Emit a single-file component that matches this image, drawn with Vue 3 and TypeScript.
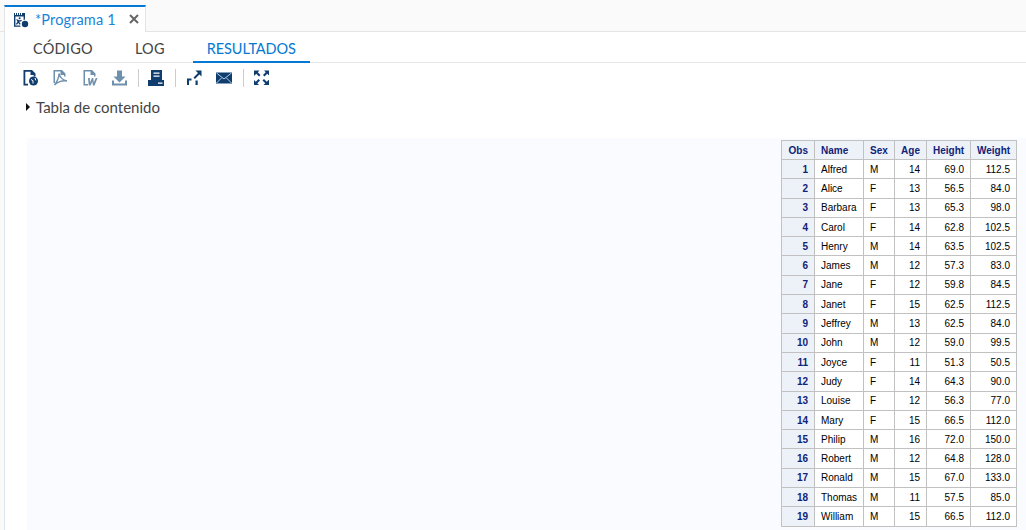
<template>
  <div class="app">
    <div class="tabbar">
      <div class="tab">
        <svg class="tab-icon" viewBox="0 0 16 16" width="16" height="16">
          <path fill="#0f3d6e" d="M1 1h1v2h1V1h1v2h1V1h1v2h1V1h1v2h1V1h3v6.600a4 4 0 0 0-1.400.4V4.400H2.400v9h4.800c.1.500.3 1 .6 1.400H1z" />
          <circle cx="6.600" cy="6.200" r="1" fill="#0f3d6e" />
          <path fill="none" stroke="#0f3d6e" stroke-width="1.300" d="M3.400 12.400l1.800-2.400L4.400 8.200l2.400.8L8.600 8.400M5.400 10l1.800 2.400" />
          <circle cx="12" cy="12" r="3.200" fill="#0f3d6e" />
        </svg>
        <span class="tab-title">*Programa 1</span>
        <svg class="tab-close" viewBox="0 0 10 10" width="10" height="10">
          <path fill="none" stroke="#666" stroke-width="2" d="M1 1l8 8M9 1l-8 8" />
        </svg>
      </div>
    </div>

    <div class="content">
      <div class="subtabs">
        <div v-for="t in subtabs" :key="t" class="subtab" :class="{ active: t === 'RESULTADOS' }">{{ t }}</div>
      </div>

      <div class="toolbar">
        <!-- html -->
        <svg class="ic" viewBox="0 0 16 16"><path fill="#0f3d6e" d="M.5 0h8.500l3.500 3.500v3h-1.800V5H7.500V1.800H2.300v11.900H5V15.500H.5z" /><circle cx="10.500" cy="11" r="4.500" fill="#0f3d6e" /><path fill="none" stroke="#fff" d="M8 9.500l2 1.200v2.800M12 8l.8 2.400" /></svg>
        <!-- pdf -->
        <svg class="ic" viewBox="0 0 16 16"><path fill="#6f90ad" d="M.5 0h8.500l3.500 3.500v3h-1.500V5H7.500V1.500H2v11.500H.5z" /><path fill="none" stroke="#6f90ad" stroke-width="1.400" d="M6 3.500c.4 3-2 8.500-4.500 11.500 2-2.800 8-5 12.500-4-3.500-.5-7-3.500-8-7.500z" /></svg>
        <!-- word -->
        <svg class="ic" viewBox="0 0 16 16"><path fill="#6f90ad" d="M.5 0h8.500l3.500 3.500v3h-1.500V5H7.500V1.500H2v12.500h3v1.500H.5z" /><path fill="#6f90ad" d="M5 8h1.800l.2 4.500L9 8h1.300l.4 4.500L12.800 8h1.700l-3 7.500h-1.700L9.500 11.500l-2 4H5.800z" /></svg>
        <!-- download -->
        <svg class="ic dl" viewBox="0 0 16 16"><path fill="#6f90ad" d="M5 .5h5v6h3.500L7.500 12.500 1.500 6.500H5zM0 10.500h2v3h11v-3h2v5H0z" /></svg>
        <span class="sep"></span>
        <!-- print -->
        <svg class="ic pr" viewBox="0 0 16 16"><path fill="#0f3d6e" d="M3 0h11v10H3zM0 10h16v6H0z" /><path fill="#fff" d="M5.500 2.500h6v1.200h-6zM5.500 5.500h6v1.200h-6zM10 12.500h4.500v1.200H10z" /></svg>
        <span class="sep"></span>
        <!-- open in new window -->
        <svg class="ic" viewBox="0 0 16 16"><path fill="#0f3d6e" d="M9.500 0.500H15.500V6.500L13.400 4.400 8.900 9 7.500 7.600 12 3zM1 8.500h4.500v2H3V15H1zM9.500 10.500h2.200V15H9.500z" /></svg>
        <!-- mail -->
        <svg class="ic" viewBox="0 0 16 16"><path fill="#0f3d6e" d="M0 2.500h16v11H0z" /><path fill="none" stroke="#b9cde0" d="M.5 3L8 9l7.500-6M.5 13l5.300-5.300M15.500 13l-5.300-5.300" /></svg>
        <span class="sep"></span>
        <!-- full screen -->
        <svg class="ic" viewBox="0 0 16 16"><path fill="#0f3d6e" d="M0 .5h5.500L3.800 2.300 6.500 5 5 6.500 2.300 3.800.5 5.500H0zM15 .5v5l-1.800-1.700L10.500 6.500 9 5l2.700-2.700L10 .5zM0 15v-5l1.800 1.700L4.500 9 6 10.500l-2.700 2.700L5 15zM15 15H9.500l1.800-1.800L8.500 10.500 10 9l2.700 2.700L14.500 10h.5z" /></svg>
      </div>

      <div class="toc"><span class="caret"></span>Tabla de contenido</div>

      <div class="results">
        <table class="data">
          <colgroup>
            <col v-for="(w, i) in colWidths" :key="i" :style="{ width: w + 'px' }" />
          </colgroup>
          <thead>
            <tr>
              <th v-for="c in columns" :key="c" :class="{ txt: c === 'Name' || c === 'Sex' }">{{ c }}</th>
            </tr>
          </thead>
          <tbody>
            <tr v-for="(r, i) in rows" :key="r[0]">
              <th>{{ i + 1 }}</th>
              <td>{{ r[0] }}</td>
              <td>{{ r[1] }}</td>
              <td class="num">{{ r[2] }}</td>
              <td class="num">{{ r[3] }}</td>
              <td class="num">{{ r[4] }}</td>
            </tr>
          </tbody>
        </table>
      </div>
    </div>
  </div>
</template>

<script setup lang="ts">
const subtabs = ['CÓDIGO', 'LOG', 'RESULTADOS']
const columns = ['Obs', 'Name', 'Sex', 'Age', 'Height', 'Weight']
const colWidths = [33, 49, 31, 32, 44, 46]

const rows: [string, string, number, string, string][] = [
  ['Alfred', 'M', 14, '69.0', '112.5'],
  ['Alice', 'F', 13, '56.5', '84.0'],
  ['Barbara', 'F', 13, '65.3', '98.0'],
  ['Carol', 'F', 14, '62.8', '102.5'],
  ['Henry', 'M', 14, '63.5', '102.5'],
  ['James', 'M', 12, '57.3', '83.0'],
  ['Jane', 'F', 12, '59.8', '84.5'],
  ['Janet', 'F', 15, '62.5', '112.5'],
  ['Jeffrey', 'M', 13, '62.5', '84.0'],
  ['John', 'M', 12, '59.0', '99.5'],
  ['Joyce', 'F', 11, '51.3', '50.5'],
  ['Judy', 'F', 14, '64.3', '90.0'],
  ['Louise', 'F', 12, '56.3', '77.0'],
  ['Mary', 'F', 15, '66.5', '112.0'],
  ['Philip', 'M', 16, '72.0', '150.0'],
  ['Robert', 'M', 12, '64.8', '128.0'],
  ['Ronald', 'M', 15, '67.0', '133.0'],
  ['Thomas', 'M', 11, '57.5', '85.0'],
  ['William', 'M', 15, '66.5', '112.0'],
]
</script>

<style>
html, body { margin: 0; background: #fff; overflow: hidden; }
</style>

<style scoped>
.app {
  width: 1026px;
  height: 530px;
  overflow: hidden;
  background: #fafafa;
  font-family: Lato, "Open Sans", sans-serif;
  color: #333;
}

.tabbar {
  height: 32px;
  box-sizing: border-box;
  padding: 5px 0 0 4px;
  border-bottom: 1px solid #e4e4e4;
  display: flex;
}
.tab {
  width: 142px;
  height: 27px;
  box-sizing: border-box;
  border-top: 2px solid #0478d2;
  border-right: 1px solid #e4e4e4;
  border-left: 1px solid #e4e4e4;
  background: #fff;
  display: flex;
  align-items: center;
  padding-left: 8px;
}
.tab-icon { flex: none; }
.tab-title { margin: -1px 0 0 6px; font-size: 14.5px; color: #1a84d8; letter-spacing: 0.15px; }
.tab-close { margin: -2px 0 0 13px; flex: none; }

.content {
  margin-left: 4px;
  height: 498px;
  background: #fff;
  border-left: 1px solid #dce6f0;
}

.subtabs {
  margin-left: 14px;
  height: 31px;
  box-sizing: border-box;
  border-bottom: 1px solid #e6e6e6;
  display: flex;
}
.subtab {
  font-size: 14.5px;
  letter-spacing: 0.25px;
  line-height: 33px;
  padding: 0 14px;
  margin-right: 14px;
  height: 31px;
  box-sizing: border-box;
  color: #444;
}
.subtab.active { color: #0478d2; border-bottom: 2px solid #0478d2; letter-spacing: -0.1px; }

.toolbar {
  display: flex;
  align-items: center;
  height: 30px;
  padding-left: 18px;
}
.ic { width: 16px; height: 16px; margin-right: 14px; flex: none; }
.ic.dl { margin: 0 13px 0 -1px; }
.ic.pr { margin-left: -1px; }
.sep { width: 1px; height: 18px; background: #ccc; margin: 0 10px 0 -3px; flex: none; }

.toc {
  display: flex;
  align-items: center;
  height: 28px;
  padding-left: 21px;
  font-size: 15px;
  color: #444;
}
.caret {
  width: 0;
  height: 0;
  border-left: 4px solid #111;
  border-top: 4px solid transparent;
  border-bottom: 4px solid transparent;
  margin-right: 6px;
}

.results {
  margin: 17px 0 0 22px;
  padding: 2px 9px 0 0;
  background: #f9fbff;
  height: 392px;
  box-sizing: border-box;
  display: flex;
  justify-content: flex-end;
}

.data {
  border-collapse: collapse;
  font-family: "Liberation Sans", Arial, sans-serif;
  font-size: 10px;
  color: #000;
  background: #fff;
  table-layout: fixed;
  width: 235px;
  align-self: flex-start;
}
.data thead tr { height: 19px; }
.data tbody tr { height: 19.3px; }
.data th, .data td {
  border: 1px solid #c1c1c1;
  padding: 0 6px;
  white-space: nowrap;
}
.data th { background: #edf2f9; color: #112277; font-weight: 700; text-align: right; }
.data th.txt { text-align: left; }
.data td { text-align: left; }
.data td.num { text-align: right; }
</style>
